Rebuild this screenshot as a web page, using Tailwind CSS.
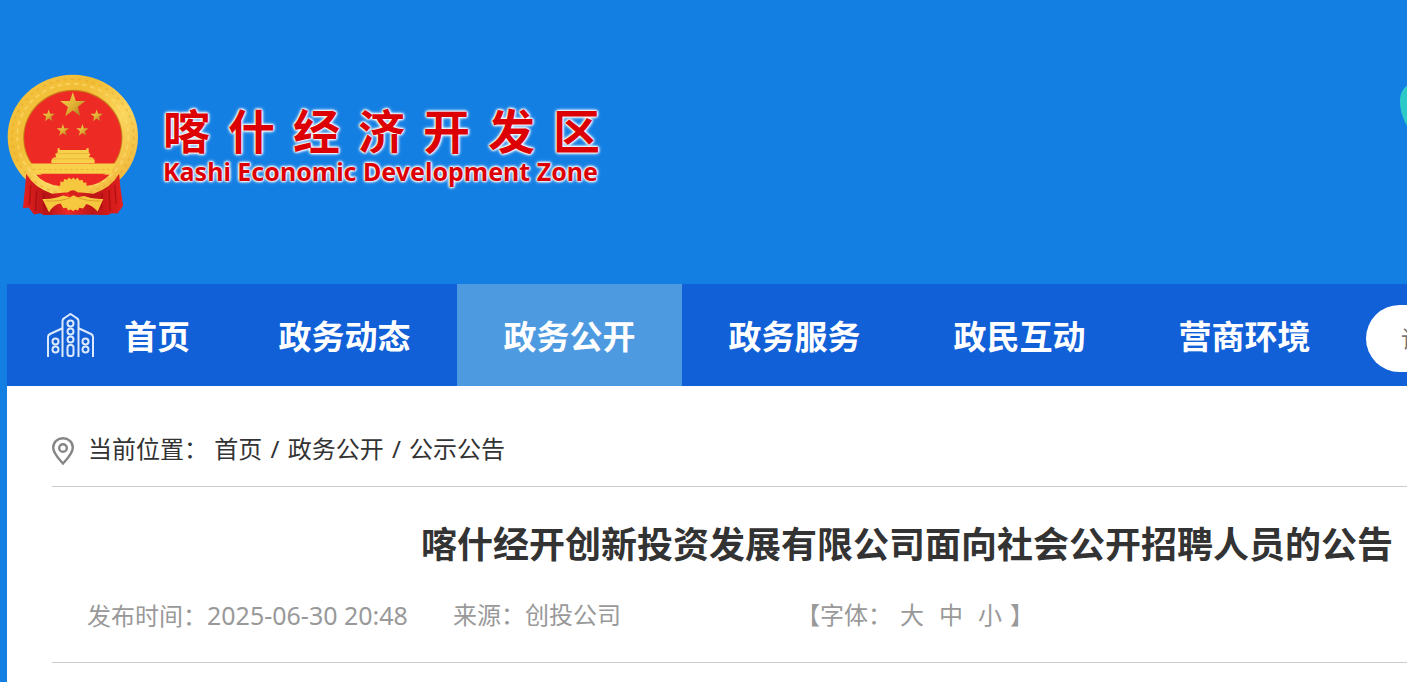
<!DOCTYPE html>
<html lang="zh-CN">
<head>
<meta charset="utf-8">
<title>喀什经济开发区</title>
<script src="https://cdn.jsdelivr.net/npm/@tailwindcss/browser@4"></script>
</head>
<body class="min-h-screen bg-[#147fe3] font-['Noto_Sans','Noto_Sans_CJK_SC',sans-serif] text-[#333]">
<div class="overflow-hidden">
<div class="ml-[7px] flex min-h-screen min-w-[1800px] flex-col">
  <header class="flex h-[284px] items-start pt-[74px]">
    <a href="#" class="flex items-start gap-6" aria-label="喀什经济开发区">
      <svg class="h-[141px] w-[132px] shrink-0" viewBox="20 26 399 423" aria-hidden="true">
        <defs>
          <linearGradient id="gold" x1="0" y1="0" x2="1" y2="1"><stop offset="0" stop-color="#f5c544"/><stop offset=".35" stop-color="#f2bd35"/><stop offset=".6" stop-color="#fad55d"/><stop offset="1" stop-color="#eead2d"/></linearGradient>
          <linearGradient id="star" x1="0" y1="0" x2="1" y2="1"><stop offset="0" stop-color="#f8d850"/><stop offset=".55" stop-color="#dfae33"/><stop offset="1" stop-color="#9b6b18"/></linearGradient>
          <linearGradient id="drape" x1="0" y1="0" x2="1" y2="0"><stop offset="0" stop-color="#e3201f"/><stop offset=".25" stop-color="#b81416"/><stop offset=".45" stop-color="#ed2724"/><stop offset=".7" stop-color="#bd1416"/><stop offset="1" stop-color="#e3201f"/></linearGradient>
          <path id="five" d="M0-38 9-11 38-11 15 7 23 35 0 18-23 35-15 7-38-11-9-11Z"/>
        </defs>
        <path d="M130 370h185l-25 76H155Z" fill="#d91b1d"/>
        <ellipse cx="219" cy="214" rx="197" ry="187" fill="url(#gold)"/>
        <ellipse cx="219" cy="214" rx="184" ry="174" fill="none" stroke="#e0a22c" stroke-width="5" stroke-dasharray="9 13" opacity=".45"/>
        <ellipse cx="219" cy="214" rx="168" ry="160" fill="none" stroke="#ffe27a" stroke-width="6" stroke-dasharray="14 11" opacity=".5"/>
        <ellipse cx="219" cy="217" rx="150" ry="145" fill="#c97d18"/>
        <ellipse cx="219" cy="218" rx="147" ry="142" fill="#ee2a25"/>
        <path d="M92 295h256l-13 31H106Z" fill="#f8d04a"/>
        <path d="M108 329h222q-30 32-75 34h-76q-46-5-71-34Z" fill="#ed2824"/>
        <path d="M173 249h6v5h81v-5h7v12l5 7-5 8h10l8 9v9H154v-9l8-9h7l-3-8 7-7Z" fill="#f8d04a"/>
        <path d="M154 281h131M166 265h104" stroke="#e2a52f" stroke-width="2"/>
        <path d="M98 313h242" stroke="#e9ae34" stroke-width="2" stroke-dasharray="9 7"/>
        <use href="#five" transform="translate(219 117)" fill="url(#star)"/>
        <g fill="url(#star)">
          <use href="#five" transform="translate(146 150) scale(.49)"/>
          <use href="#five" transform="translate(291 150) scale(.49)"/>
          <use href="#five" transform="translate(189 194) scale(.49)"/>
          <use href="#five" transform="translate(248 194) scale(.49)"/>
        </g>
        <path d="M78 326q24 42 78 60l63-6 63 6q54-18 77-60l4 44 8 53-17 23-18-1-15 8-26-3H162l-27 3-15-8-18 4-17-21-17 2 6-56Z" fill="url(#drape)"/>
        <path d="M92 360l-4 58m22-42-4 62m24-54 4 50M346 360l4 58m-22-42 4 62m-24-54-4 50" stroke="#97090e" stroke-width="4" opacity=".6"/>
        <path d="M181 361v-12l9 2 3-9 9 2 5-7 8 6 5-6 6 6 8-5 5 8 9-2 3 9 9-1v10l11 4q-20 18-42 16l-10 4-10-4q-26 2-38-16Z" fill="#f6c83f"/>
        <path d="M205 382q14-12 28 0l-4 9h-20Z" fill="#d5201d"/>
        <path d="M127 402q35 2 62-10l22 5 10-6 12 6 20-4q30 12 58 9l-17 38q-17-19-34-23l-10 14-12-2-3 8-9-3-6 5-7-5-9 3-3-8-11 1-8-14q-20 2-35 26Z" fill="#f6c83f"/>
        <path d="M137 408q48 3 76-11m90 11q-40 2-70-11" fill="none" stroke="#da9d25" stroke-width="3"/>
      </svg>
      <span class="mt-[29px] flex w-[437px] flex-col font-bold text-[#dc0005] [text-shadow:0_0_2px_#fff,0_0_2px_#fff,0_0_3px_#fff,0_0_3px_#fff,0_0_4px_#fff]">
        <span class="flex justify-between text-[47px] leading-[56px]"><span>喀</span><span>什</span><span>经</span><span>济</span><span>开</span><span>发</span><span>区</span></span>
        <span class="text-[25px] leading-6 whitespace-nowrap">Kashi Economic Development Zone</span>
      </span>
    </a>
    <svg class="mt-2 ml-[800px] h-[60px] w-[60px]" viewBox="0 0 60 60" aria-hidden="true"><path d="M12 1C5 4 0 9 0 19c0 13 5 23 14 36 12-3 30-15 30-35C44 6 28-3 12 1Z" fill="#2dc9c8"/></svg>
  </header>

  <nav class="flex h-[102px] shrink-0 items-stretch bg-[#1160d8] text-[33px] font-bold text-white">
    <a href="#" class="flex w-[225px] items-center gap-[30px] pl-10">
      <svg class="h-11 w-[47px]" viewBox="0 0 47 44" fill="none" stroke="#dce9fb" stroke-width="2" aria-hidden="true">
        <path d="M1 44V24q0-2 2-3l13-6M46 44V24q0-2-2-3l-13-6M15.500 44V8q0-2 2-3l6-4 6 4q2 1 2 3v36"/>
        <circle cx="23.500" cy="10.500" r="3"/><circle cx="23.500" cy="18.500" r="3"/><circle cx="23.500" cy="26.500" r="3"/>
        <rect x="20.500" y="32" width="6" height="11" rx="2.500"/>
        <circle cx="8.500" cy="28.500" r="3"/><circle cx="8.500" cy="36.500" r="3"/><circle cx="38.500" cy="28.500" r="3"/><circle cx="38.500" cy="36.500" r="3"/>
      </svg>
      <span class="pt-1">首页</span>
    </a>
    <a href="#" class="flex w-[225px] items-center justify-center pt-1">政务动态</a>
    <a href="#" class="flex w-[225px] items-center justify-center bg-[#4e9ae0] pt-1" aria-current="page">政务公开</a>
    <a href="#" class="flex w-[225px] items-center justify-center pt-1">政务服务</a>
    <a href="#" class="flex w-[225px] items-center justify-center pt-1">政民互动</a>
    <a href="#" class="flex w-[225px] items-center justify-center pt-1">营商环境</a>
    <input type="search" aria-label="搜索" placeholder="请输入关键字" class="mt-[21px] ml-[9px] h-[67px] w-[380px] rounded-full bg-white pl-[35px] text-2xl font-normal text-[#333] placeholder:text-[#757575]">
  </nav>

  <main class="flex-1 bg-white px-[45px] pt-[38px]">
    <div class="flex h-[63px] items-center gap-[14px] border-b border-[#ccc] pb-3 text-2xl">
      <svg class="mt-[3px] h-7 w-[22px]" viewBox="0 0 22 28" fill="none" stroke="#858585" stroke-width="2.400" aria-hidden="true"><path d="M11 26.500C9 24 1.200 17 1.200 10.500a9.800 9.300 0 0 1 19.600 0C20.800 17 13 24 11 26.500Z"/><circle cx="11" cy="11" r="3.800"/></svg>
      <div class="flex whitespace-pre"><span>当前位置： </span><a href="#">首页</a><span class="px-0.5"> / </span><a href="#">政务公开</a><span class="px-0.5"> / </span><a href="#">公示公告</a></div>
    </div>
    <h1 class="mt-[31px] text-center text-4xl leading-[54px] font-bold">喀什经开创新投资发展有限公司面向社会公开招聘人员的公告</h1>
    <div class="mt-[25px] flex h-[66px] items-start border-b border-[#ccc] pl-[35px] text-2xl leading-9 whitespace-pre text-[#999]">
      <span class="w-[366px]">发布时间：<span class="text-[25px]">2025-06-30 20:48</span></span>
      <span class="w-[343px]">来源：创投公司</span>
      <div class="flex"><span>【字体：</span><button type="button" class="ml-2">大</button><button type="button" class="ml-[15px]">中</button><button type="button" class="ml-[15px]">小</button><span class="ml-2">】</span></div>
    </div>
  </main>
</div>
</div>
</body>
</html>
